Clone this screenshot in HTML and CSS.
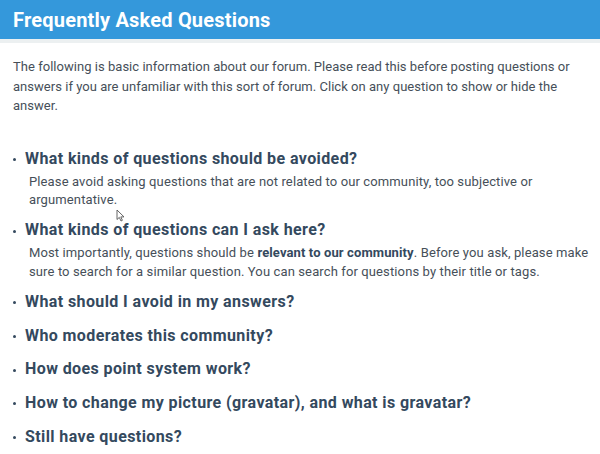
FILE: index.html
```
<!DOCTYPE html>
<html>
<head>
<meta charset="utf-8">
<link rel="stylesheet" href="styles.css">
</head>
<body>
<header class="bar"><h1 class="title">Frequently Asked Questions</h1></header>
<div class="strip"></div>
<main class="content">
<p class="intro">The following is basic information about our forum. Please read this before posting questions or answers if you are unfamiliar with this sort of forum. Click on any question to show or hide the answer.</p>
<ul class="faq">
<li class="item"><h2 class="q">What kinds of questions should be avoided?</h2>
<p class="a">Please avoid asking questions that are not related to our community, too subjective or argumentative.</p></li>
<li class="item"><h2 class="q">What kinds of questions can I ask here?</h2>
<p class="a">Most importantly, questions should be <b>relevant to our community</b>. Before you ask, please make sure to search for a similar question. You can search for questions by their title or tags.</p></li>
<li class="item"><h2 class="q">What should I avoid in my answers?</h2></li>
<li class="item"><h2 class="q">Who moderates this community?</h2></li>
<li class="item"><h2 class="q">How does point system work?</h2></li>
<li class="item"><h2 class="q">How to change my picture (gravatar), and what is gravatar?</h2></li>
<li class="item"><h2 class="q">Still have questions?</h2></li>
</ul>
</main>
<svg class="cursor" width="9" height="13" viewBox="0 0 9 13"><path d="M1 1 L1 10.5 L3.3 8.4 L5 12 L6.4 11.3 L4.8 7.9 L8 7.9 Z" fill="#fff" stroke="#555" stroke-width="0.9" stroke-linejoin="round"/></svg>
</body>
</html>
```
FILE: styles.css
```
html, body { margin: 0; padding: 0; background: #fff; }
body { font-family: Roboto, Lato, sans-serif; color: #464f59; position: relative; }
.bar { background: #3498db; height: 39px; display: flex; align-items: center; padding-left: 13px; }
.title { margin: 0; font-size: 20px; font-weight: 700; color: #fff; line-height: 22px; letter-spacing: 0.2px; }
.strip { height: 4px; background: #ecf0f1; }
.content { padding: 14px 5px 0 13px; }
.intro { margin: 0; font-size: 13px; line-height: 19.5px; letter-spacing: 0.03px; }
.faq { list-style: none; margin: 32px 0 0 0; padding: 0; }
.item { position: relative; padding-left: 12px; margin-bottom: 11.7px; }
.item::before { content: ""; position: absolute; left: 0; top: 10.5px; width: 3px; height: 3px; border-radius: 50%; background: #34495e; }
.q { margin: 0; font-size: 16px; font-weight: 700; line-height: 22px; color: #34495e; letter-spacing: 0.4px; }
.a { margin: 3px 0 -2px 4px; font-size: 13px; line-height: 18.5px; letter-spacing: 0.12px; }
.a b { font-weight: 700; color: #34495e; }
.cursor { position: absolute; left: 116px; top: 209px; }
```
